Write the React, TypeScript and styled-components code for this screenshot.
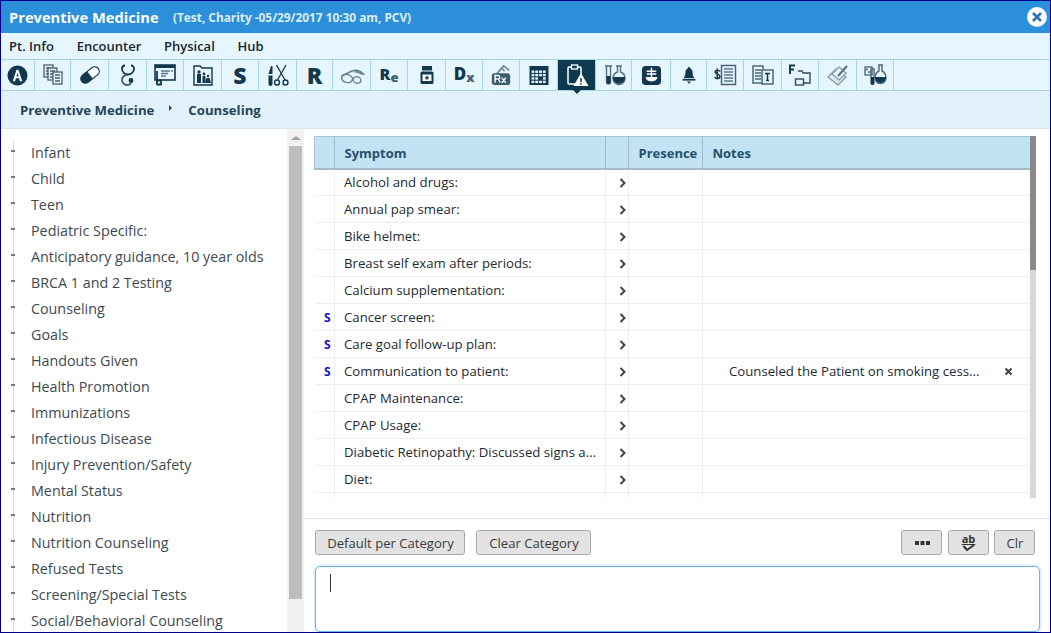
import React from "react";
import styled, { createGlobalStyle } from "styled-components";

const D = "#12384e";
const Global = createGlobalStyle`
  html, body { margin: 0; padding: 0; background: #fff; overflow: hidden; }
  body { font-family: "Open Sans", "Liberation Sans", sans-serif; }
  * { box-sizing: border-box; }
`;
const Frame = styled.div`
  width: 1051px; height: 633px; display: flex; flex-direction: column; overflow: hidden;
  border: 1px solid #00008b; background: #fff;
`;
const TitleBar = styled.header`
  height: 32px; flex: none; background: #2b90d9; color: #fff; display: flex; align-items: center;
  padding: 0 3px 0 8px;
`;
const Title = styled.div`font-size: 14.7px; font-weight: 700; line-height: 1; width: 164px; white-space: nowrap;`;
const Sub = styled.div`font-size: 11.85px; font-weight: 700; color: #dceefa; white-space: nowrap;`;
const Close = styled.button`
  margin-left: auto; width: 20px; height: 20px; border-radius: 50%; border: 0; padding: 0;
  background: radial-gradient(circle at 45% 40%, #ffffff 55%, #d5dde3 100%);
  display: flex; align-items: center; justify-content: center;
`;
const Menu = styled.nav`
  height: 26px; flex: none; background: #e6f6ff; display: flex; align-items: center; padding-left: 8px; gap: 22.7px;
  font-size: 13px; font-weight: 600; color: #17252e;
`;
const Toolbar = styled.div`
  height: 32px; flex: none; background: #e6f6ff; display: flex; align-items: stretch;
  border-top: 1px solid #a6d5e2; border-bottom: 1px solid #a6d5e2;
`;
const Tool = styled.div<{ $w: number; $on?: boolean }>`
  width: ${p => p.$w}px; flex: none; display: flex; align-items: center; justify-content: center;
  border-right: 1px solid #a6d5e2; position: relative; color: ${p => (p.$on ? "#fff" : D)};
  background: ${p => (p.$on ? "#0e3a50" : "transparent")};
  ${p => p.$on && `&::after { content: ""; position: absolute; left: 50%; bottom: -4px; margin-left: -4px;
    border: 4px solid transparent; border-bottom: 0; border-top-color: #0e3a50; }`}
`;
const BigGlyph = styled.span`font-size: 23px; font-weight: 800; line-height: 1; color: ${D};`;
const PairGlyph = styled.span<{ $size: number }>`
  font-size: ${p => p.$size}px; font-weight: 800; line-height: 1; color: ${D}; white-space: nowrap; margin-top: -3px;
`;
const PairSub = styled.span`font-size: 13px; font-weight: 800; color: #3f5f70; position: relative; top: 2px;`;
const Crumbs = styled.div`
  height: 38px; flex: none; background: #e2f2fa; display: flex; align-items: center; padding-left: 19px;
  font-size: 13.2px; font-weight: 700; color: #24455a; border-bottom: 1px solid #d6e6ee;
`;
const Arrow = styled.span`
  width: 0; height: 0; border: 3px solid transparent; border-right: 0; border-left: 3px solid #24455a;
  margin: -3px 16px 0 15px;
`;
const Body = styled.div`flex: 1; min-height: 0; display: flex;`;
const Left = styled.aside`width: 303px; flex: none; display: flex;`;
const Tree = styled.ul`
  flex: 1; margin: 11px 0 0 12px; padding: 0; list-style: none; border-left: 1px solid #ddd; height: 600px;
`;
const TreeItem = styled.li`
  height: 26px; line-height: 26px; padding-left: 17px; font-size: 14.3px; color: #3d4a52; position: relative; white-space: nowrap;
  &::before { content: ""; position: absolute; left: -3px; top: 10px; width: 4px; height: 2px; background: #777; }
`;
const VScroll = styled.div`
  width: 17px; flex: none; background: #f1f1f1; display: flex; flex-direction: column; align-items: center;
`;
const ScrollCap = styled.div`
  width: 0; height: 0; margin: 7px 0 6px; border: 5px solid transparent; border-top: 0; border-bottom: 4px solid #a3a3a3;
`;
const Thumb = styled.div`width: 13px; height: 453px; background: #bdbdbd;`;
const Right = styled.main`flex: 1; min-width: 0; display: flex; flex-direction: column;`;
const GridArea = styled.div`
  height: 390px; flex: none; display: flex; padding: 7px 14px 0 10px; border-bottom: 1px solid #e2e2e2;
`;
const Grid = styled.div`width: 716px; height: 362px; overflow: hidden; flex: none;`;
const Table = styled.table`
  width: 716px; table-layout: fixed; border-collapse: collapse; font-size: 13.2px; color: #1d2a33;
`;
const Th = styled.th`
  height: 32px; padding: 2px 0 0 9.5px; background: #c1e3f3; color: #27506e; font-size: 13px; font-weight: 700; text-align: left;
  border-top: 1px solid #a9c4d2; border-bottom: 2px solid #a0bccb; border-right: 1px solid #9fbccb;
  &:first-child { border-left: 1px solid #a9c4d2; }
  &:last-child { border-right: 0; }
`;
const Td = styled.td`
  height: 27px; padding: 0; border-bottom: 1px solid #eeeeee; border-right: 1px solid #eeeeee; overflow: hidden;
  &:last-child { border-right: 0; }
`;
const Flag = styled(Td)`text-align: center; color: #1212c8; font-weight: 700; font-size: 12px; padding-left: 6px;`;
const Symptom = styled(Td)`padding: 0 4px 0 9px; white-space: nowrap;`;
const Chevron = styled(Td)`text-align: center; color: #444; line-height: 0; padding: 2px 0 0 11px;`;
const NoteCell = styled(Td)`padding: 0 18px 0 26px;`;
const NoteRow = styled.div`display: flex; align-items: center; justify-content: space-between;`;
const NoteText = styled.span`white-space: nowrap;`;
const GridTrack = styled.div`width: 6px; height: 362px; flex: none; background: #d8d8d8;`;
const GridThumb = styled.div`width: 6px; height: 134px; background: #8a8a8a;`;
const Actions = styled.div`
  height: 47px; flex: none; display: flex; align-items: center; justify-content: space-between; padding: 0 15px 0 11px;
`;
const BtnGroup = styled.div<{ $gap: number }>`display: flex; align-items: center; gap: ${p => p.$gap}px;`;
const Btn = styled.button<{ $w: number }>`
  height: 25px; width: ${p => p.$w}px; padding: 0 0 0 1px; border: 1px solid #a9a9a9; border-radius: 3px; background: #e2e2e2;
  font: 400 13.1px "Open Sans", sans-serif; color: #3a3a3a; display: flex; align-items: center; justify-content: center;
`;
const SpellMark = styled.span`
  font-size: 11px; font-weight: 700; line-height: 10px; color: #333; display: flex; flex-direction: column; align-items: center;
  text-decoration: underline; text-underline-offset: 1px;
`;
const Notes = styled.div`
  margin: 0 10px 0 11px; height: 66px; flex: none; border: 1px solid #69b3ef; border-radius: 5px; padding: 7px 14px;
  box-shadow: 0 0 3px rgba(80,160,240,.5);
`;
const Caret = styled.div`width: 1px; height: 18px; background: #333;`;

const svg = (c: React.ReactNode, w = 24, h = 24) => (
  <svg width={w} height={h} viewBox="0 0 24 24" fill="none" stroke="currentColor" strokeWidth="1.4">{c}</svg>
);
const icons: React.ReactNode[] = [
  <svg width="21" height="21" viewBox="0 0 22 22"><circle cx="11" cy="11" r="10.5" fill={D}/><path d="M6 17 L10 5h2l4 12h-2.500l-.8-3H9.300l-.8 3zM9.900 12h2.200L11 8z" fill="#fff"/></svg>,
  svg(<g stroke="#47606e" fill="#e6f6ff" strokeWidth="1.300"><rect x="3" y="2" width="9" height="12"/><path d="M5 5h5M5 8h5M5 11h5"/><rect x="7" y="5" width="9" height="12"/><path d="M9 8h5M9 11h5M9 14h5"/><rect x="12" y="9" width="9" height="12"/><path d="M14 12h5M14 15h5M14 18h5"/></g>),
  svg(<g transform="rotate(-38 12 12)"><rect x="1.500" y="7.500" width="21" height="9" rx="4.500" fill="#fff" stroke={D} strokeWidth="1.200"/><path d="M6 7.500h6v9H6a4.500 4.500 0 0 1 0-9z" fill={D} stroke="none"/></g>),
  svg(<g strokeWidth="1.800"><path d="M9 2.500c-2 0-3 1.500-3 3.500 0 3 3 5.500 6 5.500s6-2.500 6-5.500c0-2-1-3.500-3-3.500" /><path d="M12 11.500c-3 .5-6 2-6 5.500 0 3 2.500 5 5 5s4-1.500 4-3.500" stroke="#3b5a6c"/><circle cx="15" cy="17.500" r="1.500" fill={D}/></g>),
  svg(<g><rect x="2" y="2" width="20" height="15" fill="#e6f6ff" strokeWidth="1.600"/><path d="M2 3.500h20" strokeWidth="3"/><path d="M8 8h9M8 10.500h7M8 13h5M18 8h2" stroke="#5d7786"/><path d="M4 8v14M4 21.500h4v-4H4" strokeWidth="1.800"/></g>),
  svg(<g><path d="M3 3h6l2 2h10v17H3z" fill="#e6f6ff" strokeWidth="1.400"/><g fill={D} stroke="none"><circle cx="8" cy="9" r="1.700"/><rect x="6" y="11" width="4" height="9"/><circle cx="13" cy="11" r="1.400"/><rect x="11.500" y="13" width="3" height="7"/><circle cx="17" cy="13" r="1.200"/><path d="M15.500 15h3l1.500 5h-6z"/></g></g>),
  <BigGlyph>S</BigGlyph>,
  svg(<g><path d="M2.500 11 L5 3 h1.500 V11z M2.500 12.500h4V21a2 2 0 0 1-4 0z" fill={D} stroke="none"/><path d="M10.500 2 L19 17M20 2 L11.500 17" strokeWidth="1.300"/><circle cx="11" cy="19.500" r="2.500"/><circle cx="19.500" cy="19.500" r="2.500"/></g>),
  <BigGlyph>R</BigGlyph>,
  <svg width="26" height="24" viewBox="0 0 26 24" fill="none" stroke="#63808e" strokeWidth="1.400"><ellipse cx="8" cy="15.500" rx="5.500" ry="4" transform="rotate(15 8 15.500)"/><ellipse cx="18" cy="17" rx="4" ry="3.200" transform="rotate(15 18 17)"/><path d="M13.500 16c.7-.4 1.200-.3 1.500 0M2.500 13 L13 8 c4-1.500 8-.5 11.500 3 l-3-.5c-2-1.500-4-2-6-1.500"/></svg>,
  <PairGlyph $size={16}>R<PairSub>e</PairSub></PairGlyph>,
  <svg width="14" height="18" viewBox="0 0 14 18"><rect x="2" y="0" width="10" height="4.500" fill={D}/><rect x="0.500" y="5.500" width="13" height="12.500" rx="1.500" fill={D}/><rect x="2.500" y="8.500" width="9" height="6.500" fill="#fff"/><path d="M7 9.800v4M5 11.800h4" stroke={D} strokeWidth="1.300"/></svg>,
  <PairGlyph $size={17}>D<PairSub>x</PairSub></PairGlyph>,
  <svg width="22" height="22" viewBox="0 0 24 24"><path d="M7 11 L15 2 L21 7" fill="none" stroke="#6a8593" strokeWidth="1.800"/><path d="M12 4l4 4" stroke="#6a8593" strokeWidth="1.500"/><rect x="2" y="10" width="20" height="13" rx="3" fill="#3b5b6d"/><path d="M5.500 20.500v-8h3a2 2 0 0 1 .8 3.900l1.700 4.100M5.500 16.400h3M12.800 15l4.500 5.500M17.300 15l-4.500 5.500" fill="none" stroke="#fff" strokeWidth="1.500"/></svg>,
  <svg width="20" height="19" viewBox="0 0 20 19"><rect x="0.500" y="0" width="19" height="19" fill={D}/><g fill="#e6f6ff">{[0,1,2,3].map(r=>[0,1,2,3].map(c=> (r===2&&c===2) ? null : <rect key={`${r}${c}`} x={2.500+c*3.800} y={4.500+r*3.400} width="2.800" height="2.400"/>))}</g></svg>,
  svg(<g><rect x="3" y="4" width="13" height="17" rx="1" stroke="#fff" strokeWidth="1.500"/><rect x="6.500" y="2" width="6" height="4" fill="#0e3a50" stroke="#fff" strokeWidth="1.300"/><path d="M16 10 L23.500 23 H8.500z" fill="#fff" stroke="none"/><path d="M16 15v4M16 20v1.500" stroke="#0e3a50" strokeWidth="1.500"/></g>),
  svg(<g><path d="M3 3h7M4.500 3v16a2 2 0 0 0 4 0V3" stroke="#566f7d"/><path d="M4.500 13h4v6a2 2 0 0 1-4 0z" fill={D} stroke="none"/><path d="M14 3h6M15.500 3v6c-3 1-4.500 4-4.500 6.500a6 6 0 0 0 12 0c0-2.500-1.500-5.500-4.500-6.500V3" stroke="#566f7d"/><path d="M11 14h12a6 6 0 0 1-12 1.500z" fill={D} stroke="none"/></g>),
  <svg width="21" height="21" viewBox="0 0 22 22"><rect x="1" y="1" width="20" height="20" rx="4" fill={D}/><path d="M11 3v14M6 6.500h10M6 9.500h10" stroke="#fff" strokeWidth="1.500"/><path d="M5 12.500h12c0 3-2.500 4.500-6 4.500s-6-1.500-6-4.500z" fill="#fff"/></svg>,
  <svg width="16" height="20" viewBox="0 0 20 22"><path d="M10 1a1.500 1.500 0 0 1 1.500 2c2 .5 3 2.500 3 5 0 3 .5 5 2.500 7H3c2-2 2.500-4 2.500-7 0-2.500 1-4.500 3-5A1.500 1.500 0 0 1 10 1z" fill={D}/><path d="M2 16h16v2H2z" fill={D}/><path d="M7.500 19h5L10 22z" fill={D}/></svg>,
  <svg width="26" height="24" viewBox="0 0 26 24"><path d="M8 8.500c-.5-1.500-4.500-1.800-5 .3-.4 2 5 2 5 4.800 0 2.400-4.500 2.500-5.500.6M5.200 5.500v11" fill="none" stroke={D} strokeWidth="1.500"/><rect x="9.500" y="2.500" width="14" height="19" fill="#e6f6ff" stroke="#4a6676" strokeWidth="1.500"/><path d="M12 6h9M12 9h9M12 12h9M12 15h9M12 18h9" stroke={D} strokeWidth="1.200"/></svg>,
  svg(<g stroke="#4c6878"><rect x="2" y="3" width="10" height="17" fill="#e6f6ff" strokeWidth="1.500"/><path d="M4 7h6M4 10h6M4 13h6M4 16h6"/><rect x="11" y="7" width="11" height="14" fill="#e6f6ff" strokeWidth="1.500"/><path d="M14 10.500h5M16.500 10.500v7M15 17.500h3" strokeWidth="1.500" stroke={D}/></g>),
  <svg width="24" height="24" viewBox="0 0 24 24"><path d="M2 11V2.500h5M2 6.500h4" fill="none" stroke={D} strokeWidth="1.900"/><g fill="#e6f6ff" stroke="#2f4c5d" strokeWidth="1.400"><path d="M10 8h4l1 2h7v10h-8"/><rect x="7.500" y="16" width="8" height="6"/></g></svg>,
  svg(<g><path d="M2 14 L10 6 L20 14 L12 22z" fill="#dfe9ee" stroke="#8aa1ad" strokeWidth="1.500"/><path d="M6 11 L13 4 L20 10 L13 17z" fill="#e6f6ff" stroke="#8aa1ad"/><path d="M12 13l9-10" stroke="#557080" strokeWidth="2"/></g>),
  svg(<g><rect x="2" y="4" width="7" height="8" stroke="#4c6878"/><path d="M3 6.500h2M5 9h3" stroke="#4c6878"/><path d="M8 6h3v14a1.500 1.500 0 0 1-3 0z" stroke="#4c6878"/><path d="M8 14h3v6a1.500 1.500 0 0 1-3 0z" fill={D} stroke="none"/><path d="M15 2h5M16 2v6c-2 1-4 3.500-4 7a5.500 5.500 0 0 0 11 0c0-3.500-2-6-4-7V2" stroke="#4c6878"/><path d="M12 14h11a5.500 5.500 0 0 1-11 1z" fill={D} stroke="none"/></g>),
];
const widths = [34,36,38,38,37,38,37,38,36,38,37,38,37,37,38,38,36,39,36,37,38,37,38,37];
const topics = ["Infant","Child","Teen","Pediatric Specific:","Anticipatory guidance, 10 year olds","BRCA 1 and 2 Testing","Counseling","Goals","Handouts Given","Health Promotion","Immunizations","Infectious Disease","Injury Prevention/Safety","Mental Status","Nutrition","Nutrition Counseling","Refused Tests","Screening/Special Tests","Social/Behavioral Counseling"];
const rows: [string, string, string][] = [
  ["", "Alcohol and drugs:", ""],["", "Annual pap smear:", ""],["", "Bike helmet:", ""],["", "Breast self exam after periods:", ""],["", "Calcium supplementation:", ""],
  ["S", "Cancer screen:", ""],["S", "Care goal follow-up plan:", ""],["S", "Communication to patient:", "Counseled the Patient on smoking cess..."],
  ["", "CPAP Maintenance:", ""],["", "CPAP Usage:", ""],["", "Diabetic Retinopathy: Discussed signs a...", ""],["", "Diet:", ""],["", "", ""],
];

export default function App() {
  return (
    <Frame>
      <Global />
      <TitleBar>
        <Title>Preventive Medicine</Title>
        <Sub>(Test, Charity -05/29/2017 10:30 am, PCV)</Sub>
        <Close aria-label="Close"><svg width="12" height="12" viewBox="0 0 12 12"><path d="M2 2l8 8M10 2l-8 8" stroke="#2d73b0" strokeWidth="2.600"/></svg></Close>
      </TitleBar>
      <Menu><span>Pt. Info</span><span>Encounter</span><span>Physical</span><span>Hub</span></Menu>
      <Toolbar>
        {icons.map((ic, i) => <Tool key={i} $w={widths[i]} $on={i === 15}>{ic}</Tool>)}
      </Toolbar>
      <Crumbs>Preventive Medicine<Arrow />Counseling</Crumbs>
      <Body>
        <Left>
          <Tree>{topics.map(t => <TreeItem key={t}>{t}</TreeItem>)}</Tree>
          <VScroll><ScrollCap /><Thumb /></VScroll>
        </Left>
        <Right>
          <GridArea>
            <Grid>
              <Table>
                <colgroup><col width="20"/><col width="271"/><col width="23"/><col width="74"/><col width="328"/></colgroup>
                <thead><tr><Th /><Th>Symptom</Th><Th /><Th>Presence</Th><Th>Notes</Th></tr></thead>
                <tbody>
                  {rows.map((r, i) => (
                    <tr key={i}>
                      <Flag>{r[0]}</Flag>
                      <Symptom>{r[1]}</Symptom>
                      <Chevron>{r[1] && <svg width="8" height="10" viewBox="0 0 8 10"><path d="M1.500 1l4 4-4 4" fill="none" stroke="currentColor" strokeWidth="2"/></svg>}</Chevron>
                      <Td />
                      <NoteCell>{r[2] && <NoteRow><NoteText>{r[2]}</NoteText><svg width="9" height="9" viewBox="0 0 9 9"><path d="M1.500 1.500l6 6M7.500 1.500l-6 6" stroke="#444" strokeWidth="2"/></svg></NoteRow>}</NoteCell>
                    </tr>
                  ))}
                </tbody>
              </Table>
            </Grid>
            <GridTrack><GridThumb /></GridTrack>
          </GridArea>
          <Actions>
            <BtnGroup $gap={11}>
              <Btn $w={150}>Default per Category</Btn>
              <Btn $w={115}>Clear Category</Btn>
            </BtnGroup>
            <BtnGroup $gap={5.500}>
              <Btn $w={41} aria-label="More"><svg width="15" height="4" viewBox="0 0 15 4" fill="#333"><rect x="0" y="0" width="4" height="4"/><rect x="5.500" y="0" width="4" height="4"/><rect x="11" y="0" width="4" height="4"/></svg></Btn>
              <Btn $w={41}><SpellMark>ab<svg width="14" height="8" viewBox="0 0 14 8"><path d="M1.500 2l3.500 4 7-5" fill="none" stroke="#333" strokeWidth="2"/></svg></SpellMark></Btn>
              <Btn $w={41}>Clr</Btn>
            </BtnGroup>
          </Actions>
          <Notes><Caret /></Notes>
        </Right>
      </Body>
    </Frame>
  );
}
